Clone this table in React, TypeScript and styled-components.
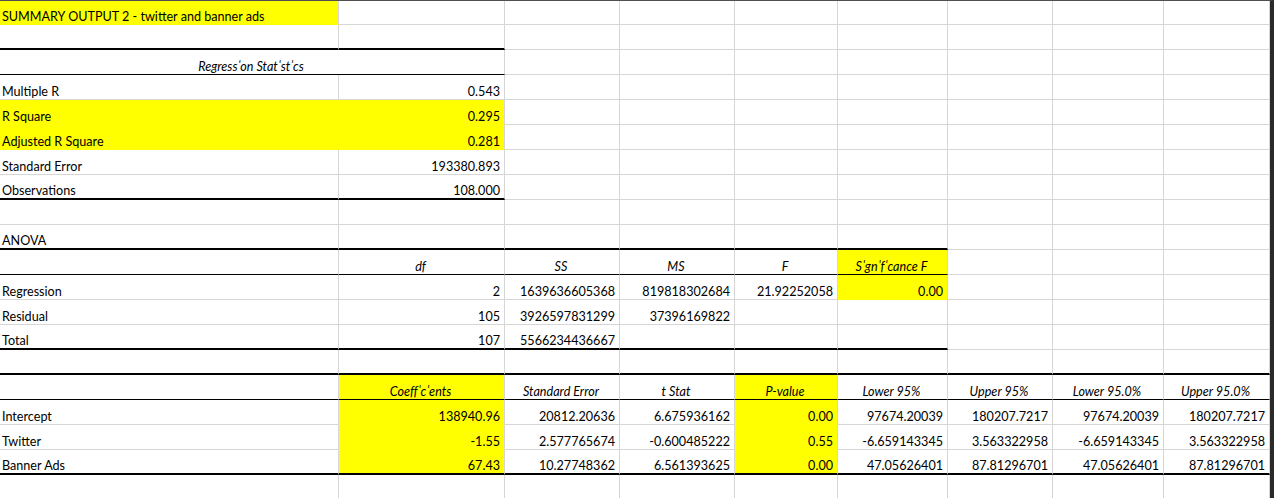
import React from "react";
import styled, { createGlobalStyle } from "styled-components";

const GlobalStyle = createGlobalStyle`
  html, body {
    margin: 0;
    padding: 0;
    background: #ffffff;
    overflow: hidden;
  }
  body {
    font-family: Lato, "Open Sans", "Liberation Sans", sans-serif;
    color: #000000;
  }
`;

const GRID = "#d6d6d6";
const YELLOW = "#ffff00";
const COLUMNS = "339px 166px 115px 115px 103px 110px 105px 111px 106px";

type Align = "l" | "r" | "c";
type Rule = "thin" | "thick" | undefined;

interface CellSpec {
  t?: string;
  a?: Align;
  i?: boolean;
  y?: boolean;
  span?: number;
  jr?: boolean;
}

interface RowSpec {
  cells: CellSpec[];
  rule?: Rule;
  ruleTo?: number;
  h?: number;
}

const Sheet = styled.div`
  width: 1274px;
  box-sizing: border-box;
  border-top: 1px solid #4f4f4f;
  border-right: 4px solid #2a2a2a;
  display: flex;
  flex-direction: column;
`;

const Row = styled.div<{ $h: number }>`
  display: grid;
  grid-template-columns: ${COLUMNS};
  height: ${(p) => p.$h}px;
`;

const Cell = styled.div<{
  $align: Align;
  $italic: boolean;
  $fill: boolean;
  $span: number;
  $rule: Rule;
  $joinRight: boolean;
}>`
  grid-column: span ${(p) => p.$span};
  box-sizing: border-box;
  display: flex;
  align-items: flex-end;
  justify-content: ${(p) =>
    p.$align === "r" ? "flex-end" : p.$align === "c" ? "center" : "flex-start"};
  padding: 0 4px 0 2px;
  min-width: 0;
  white-space: nowrap;
  font-size: 12.6px;
  line-height: 15px;
  font-style: ${(p) => (p.$italic ? "italic" : "normal")};
  background: ${(p) => (p.$fill ? YELLOW : "transparent")};
  border-right: 1px solid ${(p) => (p.$fill && p.$joinRight ? YELLOW : GRID)};
  border-bottom: ${(p) =>
    p.$rule === "thick"
      ? "2px solid #000000"
      : p.$rule === "thin"
      ? "1px solid #000000"
      : `1px solid ${p.$fill ? YELLOW : GRID}`};
`;

const Label = styled.span`
  display: block;
`;

const rows: RowSpec[] = [
  { h: 24, cells: [{ t: "SUMMARY OUTPUT 2 - twitter and banner ads", y: true }] },
  { cells: [], rule: "thick", ruleTo: 2 },
  { cells: [{ t: "Regress\u02C8on Stat\u02C8st\u02C8cs", a: "c", i: true, span: 2 }], rule: "thin", ruleTo: 2 },
  { cells: [{ t: "Multiple R" }, { t: "0.543", a: "r" }] },
  { cells: [{ t: "R Square", y: true, jr: true }, { t: "0.295", a: "r", y: true }] },
  { cells: [{ t: "Adjusted R Square", y: true, jr: true }, { t: "0.281", a: "r", y: true }] },
  { cells: [{ t: "Standard Error" }, { t: "193380.893", a: "r" }] },
  { cells: [{ t: "Observations" }, { t: "108.000", a: "r" }], rule: "thick", ruleTo: 2 },
  { cells: [] },
  { cells: [{ t: "ANOVA" }], rule: "thick", ruleTo: 6 },
  {
    cells: [
      {},
      { t: "df", a: "c", i: true },
      { t: "SS", a: "c", i: true },
      { t: "MS", a: "c", i: true },
      { t: "F", a: "c", i: true },
      { t: "S\u02C8gn\u02C8f\u02C8cance F", a: "c", i: true, y: true },
    ],
    rule: "thin",
    ruleTo: 6,
  },
  {
    cells: [
      { t: "Regression" },
      { t: "2", a: "r" },
      { t: "1639636605368", a: "r" },
      { t: "819818302684", a: "r" },
      { t: "21.92252058", a: "r" },
      { t: "0.00", a: "r", y: true },
    ],
  },
  {
    cells: [
      { t: "Residual" },
      { t: "105", a: "r" },
      { t: "3926597831299", a: "r" },
      { t: "37396169822", a: "r" },
    ],
  },
  {
    cells: [{ t: "Total" }, { t: "107", a: "r" }, { t: "5566234436667", a: "r" }],
    rule: "thick",
    ruleTo: 6,
  },
  { cells: [], rule: "thick", ruleTo: 9 },
  {
    cells: [
      {},
      { t: "Coeff\u02C8c\u02C8ents", a: "c", i: true, y: true },
      { t: "Standard Error", a: "c", i: true },
      { t: "t Stat", a: "c", i: true },
      { t: "P-value", a: "c", i: true, y: true },
      { t: "Lower 95%", a: "c", i: true },
      { t: "Upper 95%", a: "c", i: true },
      { t: "Lower 95.0%", a: "c", i: true },
      { t: "Upper 95.0%", a: "c", i: true },
    ],
    rule: "thin",
    ruleTo: 9,
  },
  {
    cells: [
      { t: "Intercept" },
      { t: "138940.96", a: "r", y: true },
      { t: "20812.20636", a: "r" },
      { t: "6.675936162", a: "r" },
      { t: "0.00", a: "r", y: true },
      { t: "97674.20039", a: "r" },
      { t: "180207.7217", a: "r" },
      { t: "97674.20039", a: "r" },
      { t: "180207.7217", a: "r" },
    ],
  },
  {
    cells: [
      { t: "Twitter" },
      { t: "-1.55", a: "r", y: true },
      { t: "2.577765674", a: "r" },
      { t: "-0.600485222", a: "r" },
      { t: "0.55", a: "r", y: true },
      { t: "-6.659143345", a: "r" },
      { t: "3.563322958", a: "r" },
      { t: "-6.659143345", a: "r" },
      { t: "3.563322958", a: "r" },
    ],
  },
  {
    cells: [
      { t: "Banner Ads" },
      { t: "67.43", a: "r", y: true },
      { t: "10.27748362", a: "r" },
      { t: "6.561393625", a: "r" },
      { t: "0.00", a: "r", y: true },
      { t: "47.05626401", a: "r" },
      { t: "87.81296701", a: "r" },
      { t: "47.05626401", a: "r" },
      { t: "87.81296701", a: "r" },
    ],
    rule: "thick",
    ruleTo: 9,
  },
  { cells: [] },
];

function renderRow(spec: RowSpec, rIdx: number) {
  const out: React.ReactNode[] = [];
  let col = 0;
  let k = 0;
  while (col < 9) {
    const c: CellSpec = spec.cells[k] ?? {};
    const span = c.span ?? 1;
    const rule = spec.rule && col < (spec.ruleTo ?? 9) ? spec.rule : undefined;
    out.push(
      <Cell
        key={`${rIdx}-${col}`}
        $align={c.a ?? "l"}
        $italic={!!c.i}
        $fill={!!c.y}
        $span={span}
        $rule={rule}
        $joinRight={!!c.jr}
      >
        {c.t ? <Label>{c.t}</Label> : null}
      </Cell>
    );
    col += span;
    k += 1;
  }
  return (
    <Row key={rIdx} $h={spec.h ?? 25}>
      {out}
    </Row>
  );
}

export default function App() {
  return (
    <>
      <GlobalStyle />
      <Sheet>{rows.map((r, i) => renderRow(r, i))}</Sheet>
    </>
  );
}
